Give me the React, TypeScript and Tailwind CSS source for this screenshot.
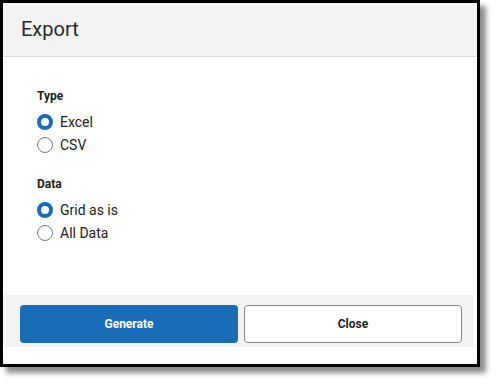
import { useState } from "react";

type Option = { value: string; label: string };

function RadioGroup({
  title,
  options,
  value,
  onChange,
}: {
  title: string;
  options: Option[];
  value: string;
  onChange: (v: string) => void;
}) {
  return (
    <div>
      <div className="text-[12px] leading-[16px] font-bold text-[#222]">{title}</div>
      <div className="mt-[6px] flex flex-col">
        {options.map((o) => {
          const checked = o.value === value;
          return (
            <label key={o.value} className="flex h-[23px] items-center gap-[7px] cursor-pointer">
              <input
                type="radio"
                className="sr-only"
                checked={checked}
                onChange={() => onChange(o.value)}
              />
              {checked ? (
                <span className="h-[16px] w-[16px] rounded-full border-[4px] border-[#1b6cb6] bg-white" />
              ) : (
                <span className="h-[16px] w-[16px] rounded-full border border-[#7a7a7a] bg-white" />
              )}
              <span className="text-[14px] leading-[16px] text-[#222]">{o.label}</span>
            </label>
          );
        })}
      </div>
    </div>
  );
}

export default function App() {
  const [type, setType] = useState("excel");
  const [data, setData] = useState("grid");

  return (
    <div className="h-[385px] w-[496px] bg-white font-['Roboto',sans-serif]">
      <div className="flex h-[367px] w-[480px] flex-col border-[3px] border-black bg-white shadow-[6px_6px_5px_rgba(0,0,0,0.45)]">
        {/* Header */}
        <div className="flex h-[54px] items-center border-b border-[#dcdcdc] bg-[#f3f3f3] pl-[18px] pb-[2px]">
          <h2 className="text-[20px] text-[#2a2a2a]">Export</h2>
        </div>

        {/* Body */}
        <div className="flex h-[238px] flex-col gap-[20px] pl-[34px] pt-[31px]">
          <RadioGroup
            title="Type"
            value={type}
            onChange={setType}
            options={[
              { value: "excel", label: "Excel" },
              { value: "csv", label: "CSV" },
            ]}
          />
          <RadioGroup
            title="Data"
            value={data}
            onChange={setData}
            options={[
              { value: "grid", label: "Grid as is" },
              { value: "all", label: "All Data" },
            ]}
          />
        </div>

        {/* Footer */}
        <div className="ml-[1px] mr-[4px] flex gap-[6px] bg-[#f3f3f3] pl-[16px] pr-[11px] pt-[10px] pb-[4px]">
          <button className="h-[38px] w-[218px] rounded-[4px] bg-[#1b6cb6] text-[12px] font-bold text-white">
            Generate
          </button>
          <button className="h-[38px] w-[218px] rounded-[4px] border border-[#8a8a8a] bg-white text-[12px] font-bold text-[#222]">
            Close
          </button>
        </div>
      </div>
    </div>
  );
}
